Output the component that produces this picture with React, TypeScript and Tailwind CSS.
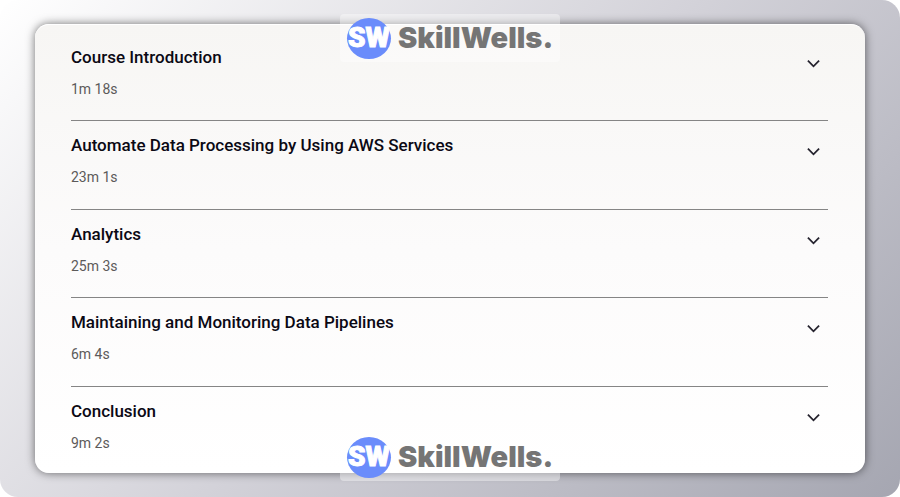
import { useState } from "react";

type Section = {
    title: string;
    duration: string;
};

const sections: Section[] = [
    { title: "Course Introduction", duration: "1m 18s" },
    { title: "Automate Data Processing by Using AWS Services", duration: "23m 1s" },
    { title: "Analytics", duration: "25m 3s" },
    { title: "Maintaining and Monitoring Data Pipelines", duration: "6m 4s" },
    { title: "Conclusion", duration: "9m 2s" },
];

function Chevron({ open }: { open: boolean }) {
    return (
        <svg
            viewBox="0 0 13 9"
            className={open ? "h-[9px] w-[13px] rotate-180" : "h-[9px] w-[13px]"}
            fill="none"
            stroke="#25232e"
            strokeWidth="1.8"
            aria-hidden="true"
        >
            <path d="M0.9 1.6 6.5 7.3 12.1 1.6" />
        </svg>
    );
}

function Brand() {
    return (
        <div className="flex h-12 w-[220px] items-center gap-[7px] rounded-[4px] bg-white/40 pl-[7px]">
            <span className="flex h-[41px] w-11 items-center justify-center rounded-[50%] bg-[#6a8cfb] font-['Roboto',sans-serif] text-[28px] leading-none font-black text-white [-webkit-text-stroke:1px_white]">
                SW
            </span>
            <span className="pb-[2px] font-['Inter',sans-serif] text-[29px] leading-none font-black text-[#757575]">
                SkillWells.
            </span>
        </div>
    );
}

function SectionRow({ section }: { section: Section }) {
    const [open, setOpen] = useState(false);

    return (
        <li className="flex flex-auto flex-col border-b border-[#858585] pt-3 pb-[19px] last:border-b-0 last:pb-[18px]">
            <button
                type="button"
                aria-expanded={open}
                onClick={() => setOpen(!open)}
                className="flex w-full items-start justify-between pr-2 text-left"
            >
                <span className="flex flex-col gap-2">
                    <span className="text-[17px] leading-6 font-medium text-[#0b0914]">{section.title}</span>
                    <span className="text-[14px] leading-6 text-[#5c5a5a]">{section.duration}</span>
                </span>
                <span className="pt-[14px]">
                    <Chevron open={open} />
                </span>
            </button>
        </li>
    );
}

export default function App() {
    return (
        <div className="min-h-screen bg-white font-['Roboto',sans-serif]">
            <main className="relative flex min-h-screen flex-col rounded-[18px] bg-linear-[135deg] from-white via-[#d3d2d9] to-[#a5a6b1] px-[35px] pt-6 pb-6">
                <div className="flex flex-auto flex-col rounded-[14px] border-t border-white bg-linear-to-b from-[#f7f6f4] via-[#fcfbfb] to-white pt-2 pr-[37px] pl-9 shadow-[0_0_10px_rgba(0,0,0,0.55)]">
                    <ul className="flex flex-auto flex-col">
                        {sections.map((section) => (
                            <SectionRow key={section.title} section={section} />
                        ))}
                    </ul>
                </div>

                {/* Brand marks laid over the card edges */}
                <div className="pointer-events-none absolute inset-x-0 top-[14px] flex justify-center">
                    <Brand />
                </div>
                <div className="pointer-events-none absolute inset-x-0 bottom-4 flex justify-center">
                    <Brand />
                </div>
            </main>
        </div>
    );
}
